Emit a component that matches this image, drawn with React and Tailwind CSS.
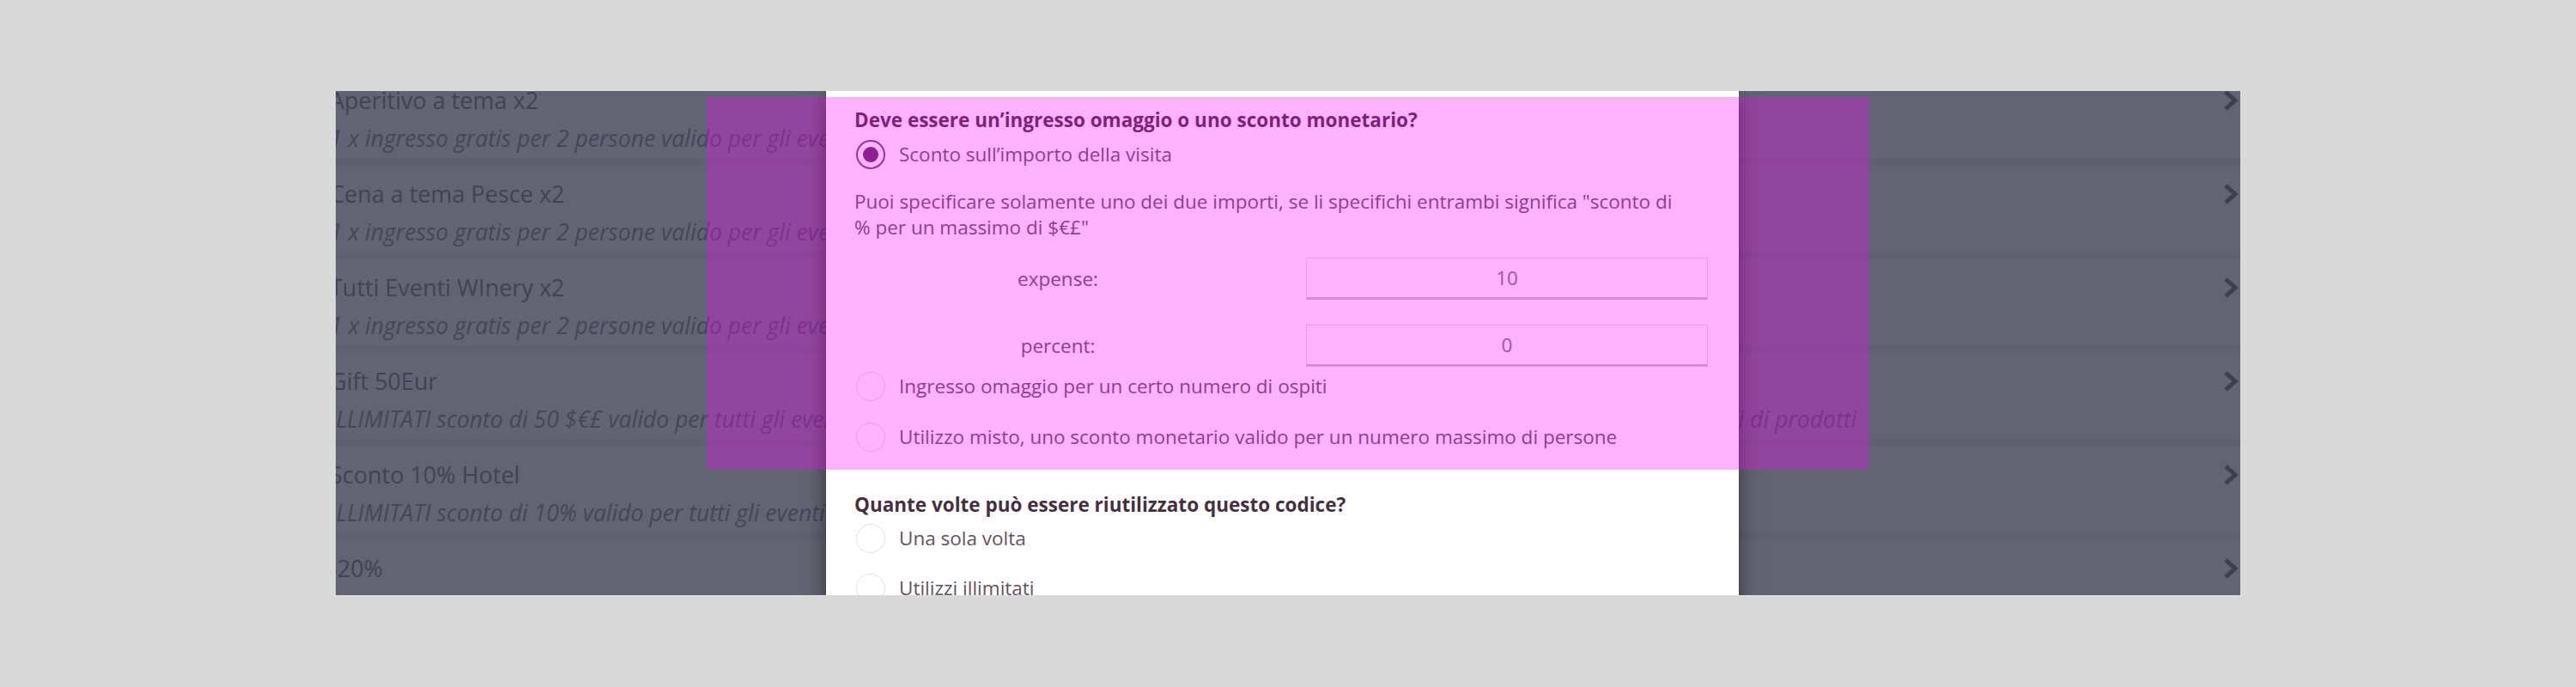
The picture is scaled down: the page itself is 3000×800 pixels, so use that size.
const items = [
  {
    title: "Aperitivo a tema x2",
    sub: "1 x ingresso gratis per 2 persone valido per gli eventi a tema Aperitivo in cantina",
  },
  {
    title: "Cena a tema Pesce x2",
    sub: "1 x ingresso gratis per 2 persone valido per gli eventi Cena a tema Pesce",
  },
  {
    title: "Tutti Eventi WInery x2",
    sub: "1 x ingresso gratis per 2 persone valido per gli eventi organizzati dalla Winery",
  },
  {
    title: "Gift 50Eur",
    sub: "ILLIMITATI sconto di 50 $€£ valido per tutti gli eventi, per le degustazioni in cantina e per l'acquisto in enoteca di vini, oli, confetture e altri tipi di prodotti",
  },
  {
    title: "Sconto 10% Hotel",
    sub: "ILLIMITATI sconto di 10% valido per tutti gli eventi e per il pernottamento in hotel",
  },
  { title: "-20%", sub: "ILLIMITATI sconto di 20% valido per tutti gli eventi" },
];

const Chevron = () => (
  <svg width="18" height="24" viewBox="0 0 18 24" className="mt-[21px] mr-[2px] shrink-0">
    <path d="M3 2 L14 12 L3 22" fill="none" stroke="#3d3e52" strokeWidth="5" strokeLinejoin="miter" />
  </svg>
);

const Radio = ({ checked, label, className }) => (
  <div className={`flex h-[34px] items-center gap-[16px] ${className}`}>
    {checked ? (
      <span className="ml-[2px] flex h-[34px] w-[34px] items-center justify-center rounded-full border-2 border-[#6b4a6b]">
        <span className="h-[18px] w-[18px] rounded-full bg-[#5e2d63]" />
      </span>
    ) : (
      <span className="ml-[2px] h-[34px] w-[34px] rounded-full border-[1.5px] border-[#dbe2e6]" />
    )}
    <span className="text-[22.5px] leading-[30px] text-[#655362]">{label}</span>
  </div>
);

const AmountRow = ({ label, value, className }) => (
  <div className={`flex h-[49px] items-center ${className}`}>
    <div className="w-[474px] text-center text-[22.5px] text-[#655362]">{label}</div>
    <input
      type="text"
      defaultValue={value}
      className="ml-[52px] h-[49px] w-[468px] border border-[#dedede] border-b-[3px] border-b-[#c5c5c5] bg-white text-center text-[22.5px] text-[#7a747a] outline-none"
    />
  </div>
);

export default function App() {
  return (
    <div className="min-h-screen w-full bg-[#d9d9d9] pt-[106px] pl-[391px] font-['Open_Sans',sans-serif]">
      <div className="relative h-[587px] w-[2218px] overflow-hidden bg-[#626473]">
        {/* list behind the backdrop */}
        <div className="-mt-[22px] -ml-[7px] flex w-[2225px] flex-col gap-[9px] bg-[#5e6070]">
          {items.map((item) => (
            <div key={item.title} className="flex h-[100px] items-start bg-[#626473]">
              <div className="min-w-0 flex-1 overflow-hidden">
                <div className="mt-[13px] h-[40px] whitespace-nowrap text-[27px] leading-[40px] text-[#414255]">
                  {item.title}
                </div>
                <div className="mt-[7px] h-[34px] whitespace-nowrap text-[26.5px] italic leading-[34px] text-[#45465a]">
                  {item.sub}
                </div>
              </div>
              <Chevron />
            </div>
          ))}
        </div>

        {/* modal */}
        <div className="absolute top-0 left-[571px] h-[700px] w-[1063px] bg-white pt-[7px] pr-[36px] pl-[33px] shadow-[0_7px_22px_rgba(0,0,0,0.5)]">
          <div className="pt-[12px] pb-[21px]">
            <div className="h-[30px] text-[22.5px] leading-[30px] font-bold text-[#46303f]">
              Deve essere un’ingresso omaggio o uno sconto monetario?
            </div>
            <Radio checked label="Sconto sull’importo della visita" className="mt-[8px]" />
            <p className="mt-[23px] text-[22.5px] leading-[30px] text-[#655362]">
              Puoi specificare solamente uno dei due importi, se li specifichi entrambi significa "sconto di
              <br />% per un massimo di $€£"
            </p>
            <AmountRow label="expense:" value="10" className="mt-[20px]" />
            <AmountRow label="percent:" value="0" className="mt-[29px]" />
            <Radio label="Ingresso omaggio per un certo numero di ospiti" className="mt-[6px]" />
            <Radio label="Utilizzo misto, uno sconto monetario valido per un numero massimo di persone" className="mt-[25px]" />
          </div>
          <div className="mt-[26px] h-[30px] text-[22.5px] leading-[30px] font-bold text-[#46303f]">
            Quante volte può essere riutilizzato questo codice?
          </div>
          <Radio label="Una sola volta" className="mt-[7px]" />
          <Radio label="Utilizzi illimitati" className="mt-[24px]" />
        </div>

        {/* inspector highlight */}
        <div className="pointer-events-none absolute top-[7px] left-[432px] h-[434px] w-[1354px] bg-[#ff00ff]/30" />
      </div>
    </div>
  );
}
